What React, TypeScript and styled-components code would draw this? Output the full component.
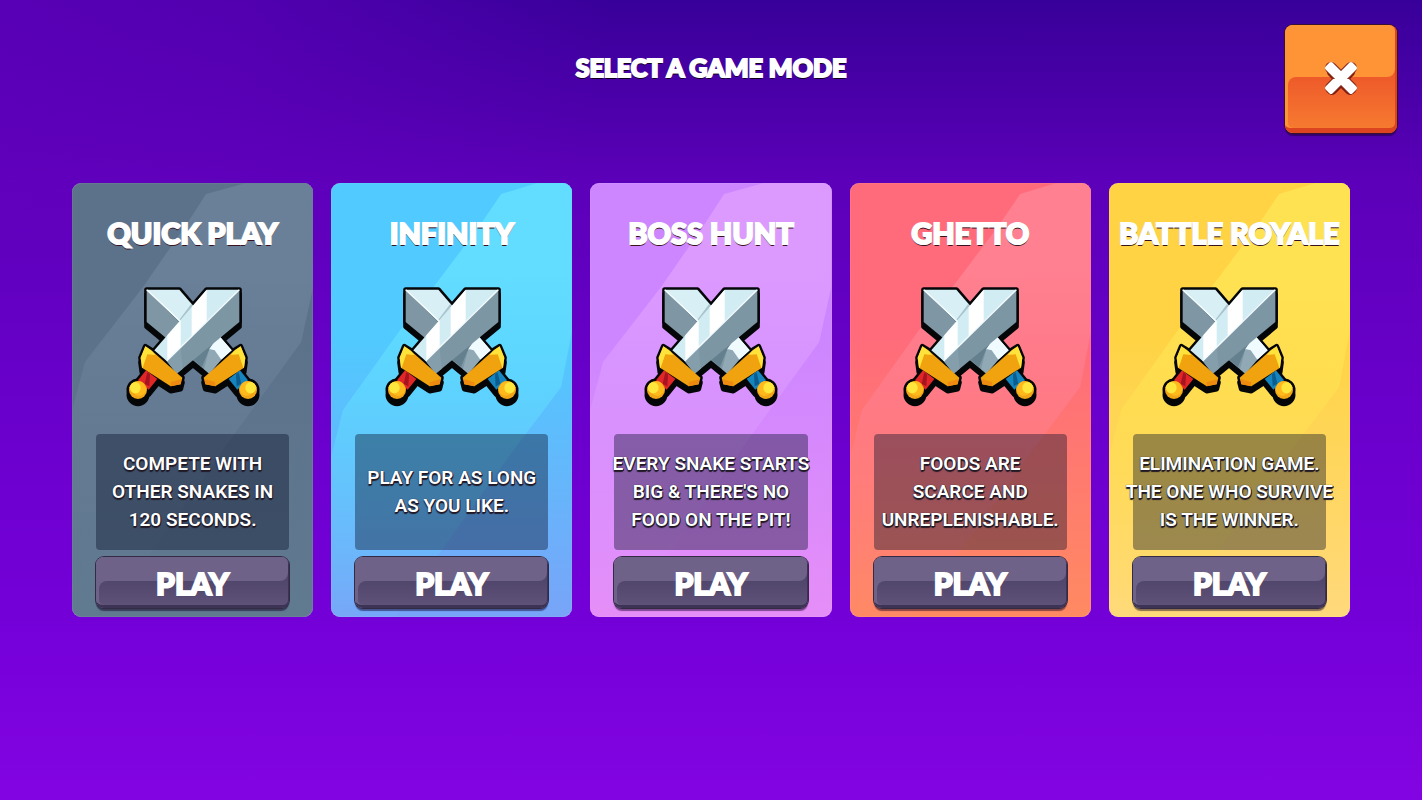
import React from "react";
import styled, { createGlobalStyle } from "styled-components";

const GlobalStyle = createGlobalStyle`
  *, *::before, *::after { box-sizing: border-box; }
  html, body, #root { min-height: 100%; }
  body {
    margin: 0;
    min-height: 100vh;
    font-family: Roboto, sans-serif;
    color: #fff;
    background:
      linear-gradient(100deg, rgba(98, 0, 190, 0.75) 0%, rgba(98, 0, 190, 0.6) 17%, rgba(98, 0, 190, 0) 42%) 0 0 / 100% 240px no-repeat,
      linear-gradient(180deg, #38009a 0%, #4a00a8 12%, #5c00b9 23%, #6a00cc 52%, #7400d8 77%, #8204e2 100%);
  }
`;

const displayFont = `"Lato", sans-serif`;
const outline = "0 0 1px #2a1020, 0 1px 1px #2a1020, 0 2px 0 #3a1420";

const Header = styled.header`
  display: grid;
  grid-template-columns: 1fr auto 1fr;
  align-items: start;
  padding: 25px 25px 0;
`;

const Heading = styled.h1`
  grid-column: 2;
  margin: 28px 0 0;
  font: 900 25px/28px ${displayFont};
  -webkit-text-stroke: 2px #fff;
  text-shadow: 0 0 1px #10001c, 0 2px 0 #10001c;
`;

interface GlossProps {
  $light: string;
  $top: string;
  $bottom: string;
  $rim: string;
  $edge: string;
  $side: number;
  $base: number;
}

const GlossyButton = styled.button<GlossProps>`
  position: relative;
  isolation: isolate;
  display: flex;
  align-items: center;
  justify-content: center;
  padding: 0;
  border: 0;
  border-radius: 8px;
  cursor: pointer;
  color: #fff;
  background: linear-gradient(90deg, ${(p) => p.$light} 50%, ${(p) => p.$top} 50%);
  box-shadow:
    inset -${(p) => p.$side}px -${(p) => p.$base}px 0 ${(p) => p.$rim},
    0 0 0 1px ${(p) => p.$edge},
    0 3px 1px rgba(20, 0, 40, 0.5);

  &::before, &::after {
    content: "";
    position: absolute;
    z-index: -1;
  }
  &::before {
    inset: 48% ${(p) => p.$side}px ${(p) => p.$base}px 3px;
    border-radius: 8px 0 5px 5px;
    background: linear-gradient(180deg, ${(p) => p.$top}, ${(p) => p.$bottom});
  }
  &::after {
    inset: 0 ${(p) => p.$side}px 52% 0;
    border-radius: 8px 6px 8px 0;
    background: ${(p) => p.$light};
  }
`;

const CloseButton = styled(GlossyButton)`
  justify-self: end;
  grid-column: 3;
  width: 112px;
  height: 108px;
`;

const PlayButton = styled(GlossyButton)`
  width: 100%;
  height: 51px;
  margin-bottom: 1px;
  font: 900 30px/32px ${displayFont};
  -webkit-text-stroke: 2px #fff;
  text-shadow: 0 1px 1px #30284a;
`;

const Modes = styled.main`
  display: grid;
  grid-template-columns: repeat(5, minmax(0, 1fr));
  gap: 18px;
  padding: 50px 72px 48px;
`;

const Card = styled.section<{ $from: string; $to: string }>`
  position: relative;
  isolation: isolate;
  display: flex;
  flex-direction: column;
  align-items: center;
  padding: 32px 24px 8px;
  border-radius: 9px;
  background: linear-gradient(180deg, ${(p) => p.$from} 35%, ${(p) => p.$to});
  box-shadow: inset 0 0 1px rgba(255, 255, 255, 0.6);
`;

const Facet = styled.svg`
  position: absolute;
  inset: 0;
  z-index: -1;
  width: 100%;
  height: 100%;
  border-radius: 9px;
`;

const CardTitle = styled.h2`
  margin: 0 0 34px;
  white-space: nowrap;
  font: 900 29px/36px ${displayFont};
  -webkit-text-stroke: 2px #fff;
  text-shadow: ${outline};
`;

const Description = styled.p`
  display: flex;
  align-items: center;
  justify-content: center;
  width: 100%;
  min-height: 116px;
  margin: 25px 0 7px;
  border-radius: 4px;
  white-space: pre;
  text-align: center;
  font: 600 19px/28px Roboto, sans-serif;
  text-shadow: 0 0 1px #221a26, 0 2px 1px #221a26, 1px 1px 0 #221a26;
  background: rgba(8, 14, 40, 0.4);
`;

const bladeOutline = "M388 58 L290 58 L133 240 L200 310 L388 155 Z";
const guardOutline = "M106 228 L122 238 L217 322 L212 342 L182 348 L96 292 L92 262 Z";
const gripOutline = "M108 300 L142 326 L116 358 L84 330 Z";

function Silhouette() {
  return (
    <>
      <path d={bladeOutline} />
      <path d={guardOutline} />
      <path d={gripOutline} />
      <circle cx="84" cy="359" r="27" />
    </>
  );
}

function Hilt({ grip, shade }: { grip: string; shade: string }) {
  return (
    <>
      <path d={gripOutline} fill={grip} />
      <path d="M112 306 L120 312 L118 348 L104 340 Z" fill={shade} />
      <circle cx="84" cy="359" r="27" fill="#f2a516" />
      <path d="M58 352 A27 27 0 0 1 100 338 L109 354 Q108 374 92 376 Q72 378 58 352 Z" fill="#ffb91c" />
      <ellipse cx="76" cy="352" rx="16" ry="17" fill="#ffe63c" />
      <path d={guardOutline} fill="#f0a30e" />
      <path d="M106 228 L126 242 L136 254 L112 252 L98 292 L96 292 L92 262 Z" fill="#ffe23a" />
      <path d="M182 336 L214 326 L212 342 L182 348 Z" fill="#ee8a10" />
    </>
  );
}

function Swords() {
  return (
    <svg width="136" height="124" viewBox="45 44 408 372" aria-hidden="true">
      <g fill="#050608" stroke="#050608" strokeWidth="15" strokeLinejoin="round">
        <g transform="translate(0 14)">
          <Silhouette />
          <g transform="matrix(-1 0 0 1 498 0)"><Silhouette /></g>
        </g>
        <Silhouette />
        <g transform="matrix(-1 0 0 1 498 0)"><Silhouette /></g>
      </g>
      <g transform="matrix(-1 0 0 1 498 0)">
        <path d="M388 58 L290 58 L133 240 L170 272 Z" fill="#d8eff6" />
        <path d="M388 58 L388 155 L200 310 L170 272 Z" fill="#7f97a5" />
        <path d="M254 100 L246 110 L276 160 L290 148 Z" fill="#a9c3cd" />
        <path d="M172 195 L133 240 L164 268 L184 240 L200 236 Z" fill="#f0fbff" />
        <path d="M200 236 L184 240 L164 268 L200 310 L216 296 Z" fill="#90a9b5" />
        <path d="M172 195 L200 236 L222 290 L254 264 Z" fill="#64808f" />
        <path d="M388 58 L284 156" stroke="#f7ffff" strokeWidth="4" />
        <Hilt grip="#1684bd" shade="#0b5d8f" />
      </g>
      <path d="M388 58 L290 58 L133 240 L170 272 Z" fill="#d2ecf3" />
      <path d="M290 58 L290 154 L245 198 L245 111 Z M212 150 L212 231 L172 270 L172 195 Z" fill="#fff" />
      <path d="M388 58 L388 155 L200 310 L170 272 Z" fill="#7d96a3" />
      <path d="M170 272 L212 232 L218 295 L200 310 Z" fill="#859eab" />
      <path d="M388 58 L170 272" stroke="#f4fcff" strokeWidth="4" />
      <Hilt grip="#e02626" shade="#a51420" />
    </svg>
  );
}

type FacetShape = "high" | "low";

const facets: Record<FacetShape, string> = {
  high: "174,0 134,11 116,39 71,104 13,179 0,228 0,434 8,432 46,420 78,372 150,268 229,159 241,104 241,0",
  low: "206,0 170,11 149,42 104,102 69,147 12,227 0,274 0,434 64,434 105,375 175,277 230,204 241,147 241,0",
};

interface Mode {
  title: string;
  text: string;
  from: string;
  to: string;
  facet: FacetShape;
  tint: string;
}

const modes: Mode[] = [
  { title: "QUICK PLAY", text: "COMPETE WITH\nOTHER SNAKES IN\n120 SECONDS.", from: "#5c728b", to: "#607a90", facet: "high", tint: "#6a8098" },
  { title: "INFINITY", text: "PLAY FOR AS LONG\nAS YOU LIKE.", from: "#50caff", to: "#78a4f8", facet: "low", tint: "#62dcff" },
  { title: "BOSS HUNT", text: "EVERY SNAKE STARTS\nBIG & THERE'S NO\nFOOD ON THE PIT!", from: "#cd86ff", to: "#e68ef8", facet: "high", tint: "#dc9aff" },
  { title: "GHETTO", text: "FOODS ARE\nSCARCE AND\nUNREPLENISHABLE.", from: "#ff6b7b", to: "#ff8a62", facet: "low", tint: "#ff8090" },
  { title: "BATTLE ROYALE", text: "ELIMINATION GAME.\nTHE ONE WHO SURVIVE\nIS THE WINNER.", from: "#ffd343", to: "#ffd97c", facet: "low", tint: "#ffe252" },
];

function ModeCard({ mode }: { mode: Mode }) {
  const gradientId = `facet-${mode.title.replace(" ", "-")}`;
  return (
    <Card $from={mode.from} $to={mode.to}>
      <Facet viewBox="0 0 241 434" preserveAspectRatio="none" aria-hidden="true">
        <defs>
          <linearGradient id={gradientId} gradientUnits="userSpaceOnUse" x1="0" y1="0" x2="0" y2="434">
            <stop offset="0.2" stopColor={mode.tint} />
            <stop offset="0.6" stopColor={mode.tint} stopOpacity="0.45" />
            <stop offset="1" stopColor={mode.tint} stopOpacity="0.05" />
          </linearGradient>
        </defs>
        <polygon points={facets[mode.facet]} fill={`url(#${gradientId})`} />
      </Facet>
      <CardTitle>{mode.title}</CardTitle>
      <Swords />
      <Description>{mode.text}</Description>
      <PlayButton
        type="button"
        $light="#6e6288"
        $top="#51466b"
        $bottom="#5e5279"
        $rim="#3c3355"
        $edge="#332a44"
        $side={1}
        $base={3}
      >
        PLAY
      </PlayButton>
    </Card>
  );
}

export default function App() {
  return (
    <>
      <GlobalStyle />
      <Header>
        <Heading>SELECT A GAME MODE</Heading>
        <CloseButton
          type="button"
          aria-label="Close"
          $light="#ff9436"
          $top="#ee5a2a"
          $bottom="#f67a30"
          $rim="#dc4420"
          $edge="#3a1030"
          $side={2}
          $base={5}
        >
          <svg width="36" height="38" viewBox="0 0 36 38" fill="none" strokeLinejoin="round" aria-hidden="true">
            <path d="M9 12 L27 30 M27 12 L9 30" stroke="#7a1c14" strokeWidth="10" strokeLinecap="round" />
            <path d="M8 8 L28 28 M28 8 L8 28" stroke="#8a2a18" strokeWidth="12" strokeLinecap="round" />
            <path d="M8 4 L18 14 L28 4 L32 8 L22 18 L32 28 L28 32 L18 22 L8 32 L4 28 L14 18 L4 8 Z" fill="#fff" stroke="#fff" strokeWidth="4" />
          </svg>
        </CloseButton>
      </Header>
      <Modes>
        {modes.map((mode) => (
          <ModeCard key={mode.title} mode={mode} />
        ))}
      </Modes>
    </>
  );
}
